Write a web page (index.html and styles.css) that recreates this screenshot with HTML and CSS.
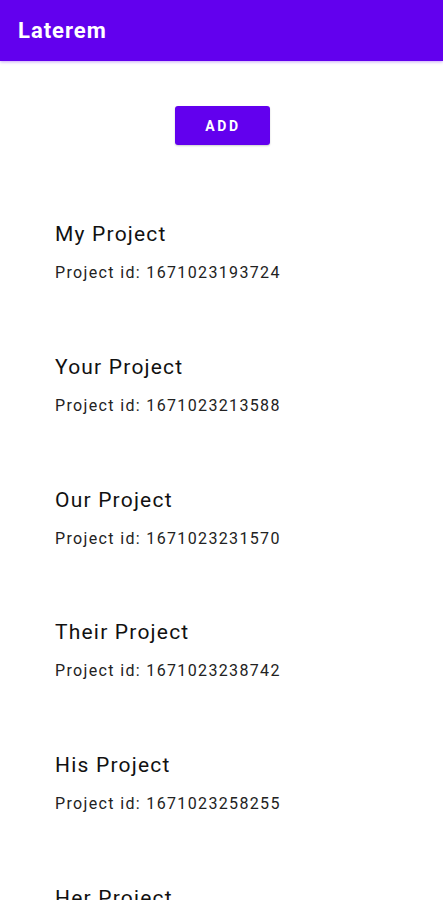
FILE: index.html
```html
<!DOCTYPE html>
<html lang="en">
<head>
    <meta charset="UTF-8">
    <meta name="viewport" content="width=device-width, initial-scale=1.0">
    <title>Laterem</title>
    <link rel="stylesheet" href="styles.css">
</head>
<body>
    <!-- App bar -->
    <header class="app-bar">
        <h1 class="app-title">Laterem</h1>
    </header>

    <main class="main-content">
        <div class="add-row">
            <button class="add-btn">ADD</button>
        </div>

        <!-- Lista de proyectos -->
        <ul class="project-list">
            <li class="project">
                <div class="project-name">My Project</div>
                <div class="project-id">Project id: 1671023193724</div>
            </li>
            <li class="project">
                <div class="project-name">Your Project</div>
                <div class="project-id">Project id: 1671023213588</div>
            </li>
            <li class="project">
                <div class="project-name">Our Project</div>
                <div class="project-id">Project id: 1671023231570</div>
            </li>
            <li class="project">
                <div class="project-name">Their Project</div>
                <div class="project-id">Project id: 1671023238742</div>
            </li>
            <li class="project">
                <div class="project-name">His Project</div>
                <div class="project-id">Project id: 1671023258255</div>
            </li>
            <li class="project">
                <div class="project-name">Her Project</div>
                <div class="project-id">Project id: 1671023270111</div>
            </li>
        </ul>
    </main>
</body>
</html>
```

FILE: styles.css
```css
/* Reset */
* {
    margin: 0;
    padding: 0;
    box-sizing: border-box;
}

body {
    font-family: Roboto, "Noto Sans", sans-serif;
    background-color: #ffffff;
    color: #000000;
    overflow: hidden;
    height: 900px;
}

/* App bar */
.app-bar {
    background-color: #6200ee;
    height: 61px;
    display: flex;
    align-items: center;
    padding: 0 18px;
    box-shadow: 0 1px 3px rgba(98, 0, 238, 0.35);
}

.app-title {
    color: #ffffff;
    font-size: 22px;
    font-weight: 700;
    letter-spacing: 1px;
}

/* Contenido */
.main-content {
    padding-top: 45px;
}

.add-row {
    display: flex;
    justify-content: center;
}

.add-btn {
    width: 95px;
    height: 39px;
    margin-left: 1px;
    padding-left: 2px;
    background-color: #6200ee;
    color: #ffffff;
    border: none;
    border-radius: 3px;
    font-family: Roboto, sans-serif;
    font-size: 14px;
    font-weight: 700;
    letter-spacing: 2.6px;
    box-shadow: 0 1px 2px rgba(0, 0, 0, 0.2);
}

.project-list {
    list-style: none;
    margin-top: 77px;
    padding-left: 55px;
    display: flex;
    flex-direction: column;
    gap: 71.75px;
}

.project-name {
    font-size: 21px;
    line-height: 24px;
    letter-spacing: 1.2px;
    color: #111111;
}

.project-id {
    margin-top: 17px;
    font-size: 16px;
    line-height: 20px;
    letter-spacing: 1.35px;
    color: #222222;
}
```
